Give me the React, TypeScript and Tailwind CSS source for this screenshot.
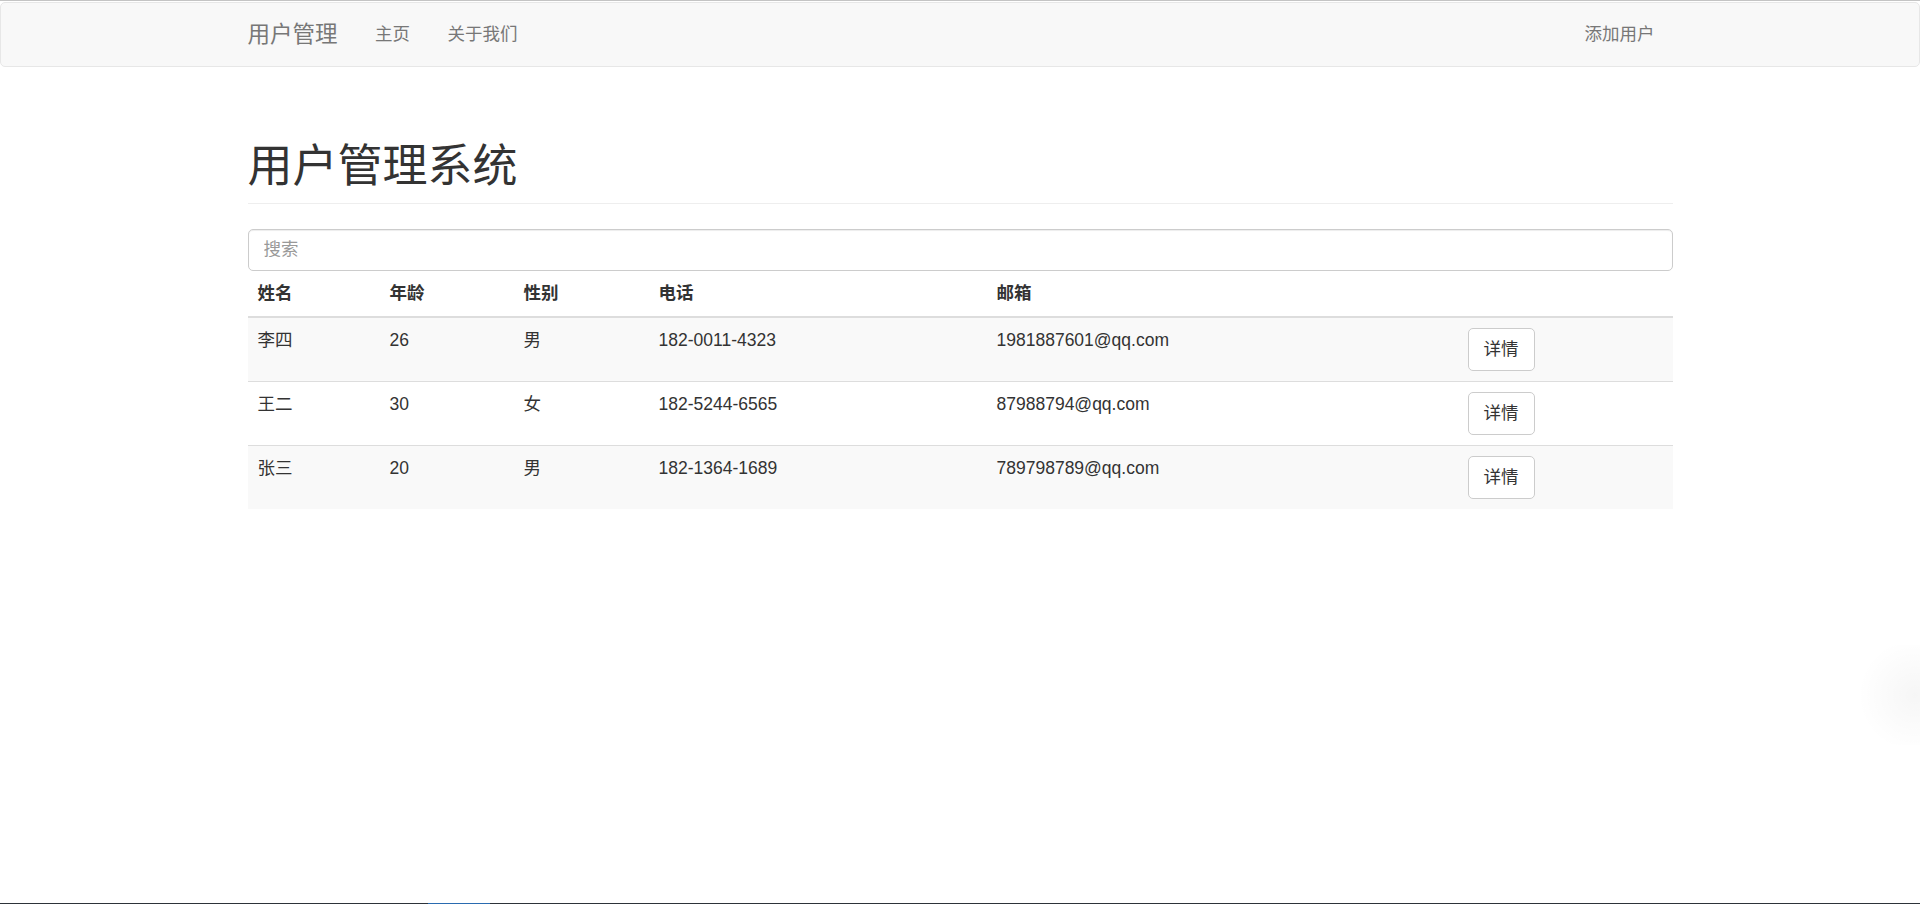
const users = [
  { name: "李四", age: 26, sex: "男", phone: "182-0011-4323", email: "1981887601@qq.com" },
  { name: "王二", age: 30, sex: "女", phone: "182-5244-6565", email: "87988794@qq.com" },
  { name: "张三", age: 20, sex: "男", phone: "182-1364-1689", email: "789798789@qq.com" },
]

const font = `font-["Liberation_Sans","Noto_Sans_CJK_SC",sans-serif]`

export default function App() {
  return (
    <div className={`${font} relative flex h-[904px] flex-col overflow-hidden bg-white text-[17.5px] leading-[25px] text-[#333]`}>
      {/* top edge */}
      <div className="h-px bg-[#c4c4c4]" />
      <div className="h-px bg-white" />

      {/* Navbar */}
      <nav className="h-[65px] rounded-[5px] border border-[#e7e7e7] bg-[#f8f8f8]">
        <div className="mx-auto flex h-full w-[1462.5px] items-center">
          <a className="px-[18.75px] text-[22.5px] leading-[25px] text-[#777]">用户管理</a>
          <a className="px-[18.75px] text-[#777]">主页</a>
          <a className="px-[18.75px] text-[#777]">关于我们</a>
          <a className="ml-auto mr-[18px] px-[18.75px] text-[#777]">添加用户</a>
        </div>
      </nav>

      {/* Content */}
      <main className="mx-auto w-[1425px] flex-1">
        <div className="mt-[75px] border-b border-[#eee] pb-[11px]">
          <h1 className="text-[45px] font-normal leading-[49.5px] text-[#333]">用户管理系统</h1>
        </div>

        <input
          placeholder="搜索"
          className="mt-[25px] block h-[42.5px] w-full rounded-[5px] border border-[#ccc] px-[15px] text-[17.5px] text-[#555] shadow-[inset_0_1px_1px_rgba(0,0,0,0.075)] outline-none placeholder:text-[#999]"
        />

        <table className="w-full border-collapse text-left">
          <thead>
            <tr className="border-b-[2.5px] border-[#ddd]">
              <th className="w-[132px] p-[10px] font-bold">姓名</th>
              <th className="w-[134px] p-[10px] font-bold">年龄</th>
              <th className="w-[135px] p-[10px] font-bold">性别</th>
              <th className="w-[338px] p-[10px] font-bold">电话</th>
              <th className="w-[471px] p-[10px] font-bold">邮箱</th>
              <th className="p-[10px]"></th>
            </tr>
          </thead>
          <tbody>
            {users.map((u, i) => (
              <tr key={u.name} className={`border-t border-[#ddd] ${i % 2 === 0 ? "bg-[#f9f9f9]" : "bg-white"}`}>
                <td className="p-[10px] align-top">{u.name}</td>
                <td className="p-[10px] align-top">{u.age}</td>
                <td className="p-[10px] align-top">{u.sex}</td>
                <td className="p-[10px] align-top">{u.phone}</td>
                <td className="p-[10px] align-top">{u.email}</td>
                <td className="p-[10px] align-top">
                  <button className="h-[43px] rounded-[5px] border border-[#ccc] bg-white px-[15px] text-[17.5px] text-[#333]">
                    详情
                  </button>
                </td>
              </tr>
            ))}
          </tbody>
        </table>
      </main>

      {/* faint floating widget shadow */}
      <div className="absolute right-[-60px] top-[645px] h-[100px] w-[130px] rounded-full bg-[radial-gradient(circle,rgba(0,0,0,0.035),rgba(0,0,0,0)_70%)]" />

      {/* bottom edge */}
      <div className="flex h-px bg-[#2d3339]">
        <div className="ml-[428px] w-[62px] bg-[#2a6bb0]" />
      </div>
    </div>
  )
}
